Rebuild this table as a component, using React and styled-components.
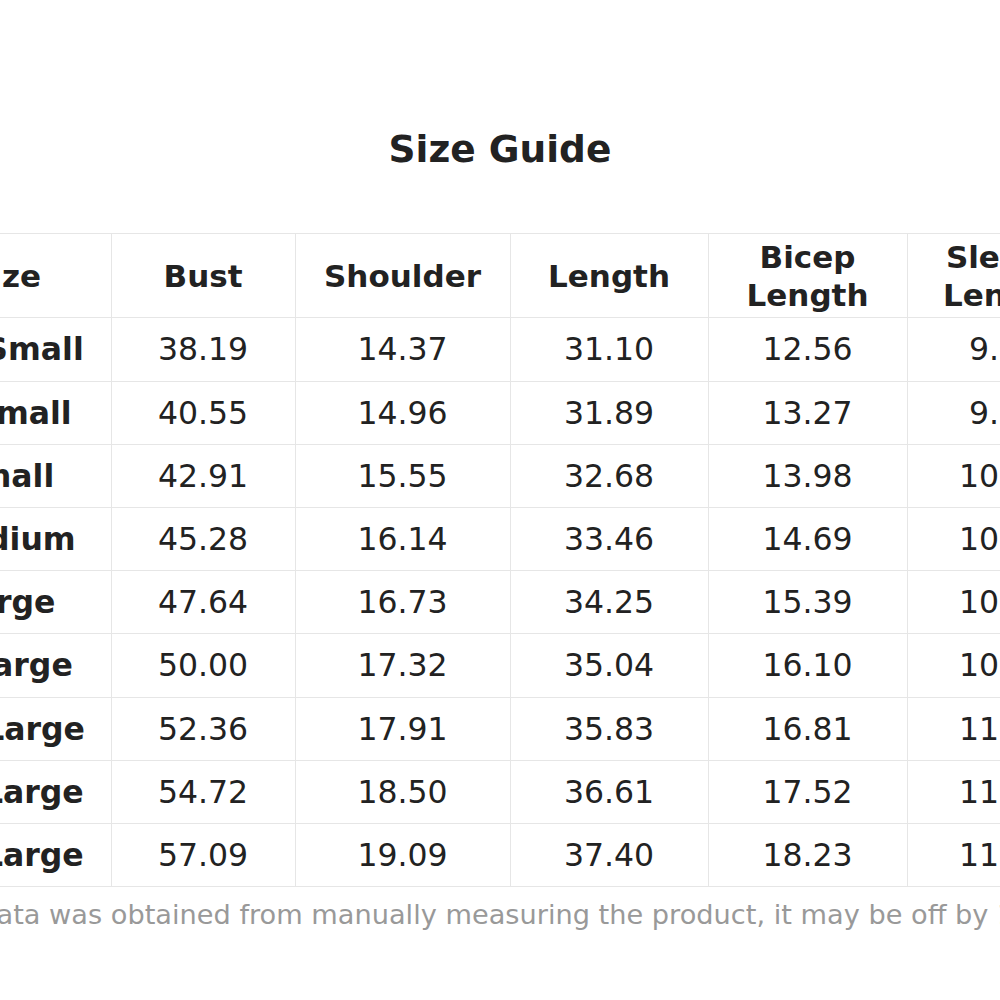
import React from 'react'
import styled, { createGlobalStyle } from 'styled-components'

const GlobalStyle = createGlobalStyle`
  html, body {
    margin: 0;
    padding: 0;
    background: #ffffff;
  }
  body {
    font-family: "DejaVu Sans", Verdana, sans-serif;
    color: #222222;
  }
`;

const columns = [
  { key: 'size', label: 'Size', width: 212 },
  { key: 'bust', label: 'Bust', width: 184 },
  { key: 'shoulder', label: 'Shoulder', width: 215 },
  { key: 'length', label: 'Length', width: 198 },
  { key: 'bicep', label: 'Bicep Length', width: 199 },
  { key: 'sleeve', label: 'Sleeve Length', width: 194 },
];

const rows = [
  ['XX-Small', '38.19', '14.37', '31.10', '12.56', '9.37'],
  ['X-Small', '40.55', '14.96', '31.89', '13.27', '9.69'],
  ['Small', '42.91', '15.55', '32.68', '13.98', '10.00'],
  ['Medium', '45.28', '16.14', '33.46', '14.69', '10.31'],
  ['Large', '47.64', '16.73', '34.25', '15.39', '10.63'],
  ['X-Large', '50.00', '17.32', '35.04', '16.10', '10.94'],
  ['XX-Large', '52.36', '17.91', '35.83', '16.81', '11.26'],
  ['3X-Large', '54.72', '18.50', '36.61', '17.52', '11.57'],
  ['4X-Large', '57.09', '19.09', '37.40', '18.23', '11.89'],
];

function App() {
  return (
    <Page>
      <GlobalStyle />
      <Title>Size Guide</Title>
      <Table>
        <colgroup>
          {columns.map((c) => (
            <Col key={c.key} $width={c.width} />
          ))}
        </colgroup>
        <thead>
          <tr>
            {columns.map((c) => (
              <Th key={c.key}>{c.label}</Th>
            ))}
          </tr>
        </thead>
        <tbody>
          {rows.map((r) => (
            <tr key={r[0]}>
              {r.map((v, i) => (
                <Td key={i} $label={i === 0}>{v}</Td>
              ))}
            </tr>
          ))}
        </tbody>
      </Table>
      <Note>The data was obtained from manually measuring the product, it may be off by 1 inch</Note>
    </Page>
  );
}

const Page = styled.div`
  width: 100%;
  min-height: 1000px;
  overflow: hidden;
  display: flex;
  flex-direction: column;
  align-items: center;
  padding-top: 126.5px;
  box-sizing: border-box;
`;

const Title = styled.h1`
  margin: 0 0 61.5px;
  font-size: 37.5px;
  line-height: 1.2;
  font-weight: 700;
  color: #222222;
`;

const Table = styled.table`
  flex-shrink: 0;
  width: 1202px;
  table-layout: fixed;
  border-collapse: collapse;
  font-size: 31.5px;
  line-height: 38.2px;
`;

const Col = styled.col`
  width: ${(p) => p.$width}px;
`;

const Th = styled.th`
  padding: 3.5px 16px;
  border: 1px solid #e6e6e6;
  font-size: 31px;
  font-weight: 700;
  text-align: center;
  color: #222222;
`;

const Td = styled.td`
  padding: 12px 16px;
  border: 1px solid #e6e6e6;
  text-align: center;
  font-weight: ${(p) => (p.$label ? 700 : 400)};
  color: #222222;
`;

const Note = styled.p`
  margin: 12px 0 0;
  width: 1202px;
  flex-shrink: 0;
  text-align: center;
  font-size: 27.2px;
  line-height: 1.2;
  color: #999999;
`;

export default App
